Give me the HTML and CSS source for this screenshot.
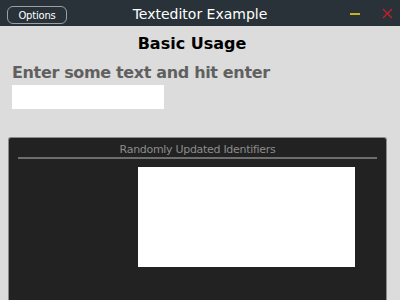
FILE: index.html
```html
<!DOCTYPE html>
<html>
<head>
<meta charset="utf-8">
<link rel="stylesheet" href="styles.css">
</head>
<body>
<div class="titlebar">
  <button class="options">Options</button>
  <div class="title">Texteditor Example</div>
  <div class="controls">
    <span class="min"></span>
    <svg class="close" width="11" height="11" viewBox="0 0 11 11"><path d="M1 1L10 10M10 1L1 10" stroke="#c8202a" stroke-width="1.3"/></svg>
  </div>
</div>
<div class="content">
  <h1 class="heading">Basic Usage</h1>
  <div class="label">Enter some text and hit enter</div>
  <div class="input"></div>
  <div class="panel">
    <div class="panel-title">Randomly Updated Identifiers</div>
    <div class="rule"></div>
    <div class="box"></div>
  </div>
</div>
</body>
</html>
```
FILE: styles.css
```css
html, body { margin: 0; padding: 0; }
body {
  width: 400px; height: 300px; overflow: hidden;
  background: #dcdcdc;
  font-family: "DejaVu Sans", Verdana, sans-serif;
}
.titlebar {
  height: 26px;
  background: #283238;
  position: relative;
  display: flex;
  align-items: center;
}
.options {
  margin-left: 7px;
  width: 60px; height: 18px;
  border: 1px solid #9aa0a4;
  border-radius: 6px;
  background: transparent;
  color: #ffffff;
  font-family: "DejaVu Sans", sans-serif;
  font-size: 10px;
  letter-spacing: -0.2px;
  padding: 0;
  margin-top: 4px;
  box-sizing: border-box;
}
.title {
  position: absolute; left: 0; right: 0; top: 5px;
  text-align: center;
  color: #ffffff;
  font-size: 14px;
  line-height: 18px;
  pointer-events: none;
}
.controls {
  margin-left: auto;
  display: flex; align-items: center;
  margin-right: 7px;
  margin-top: 1px;
}
.min {
  width: 10px; height: 2px; background: #c8b41e;
  margin-right: 22px;
}
.close { display: block; }
.content { padding: 0 12px; }
.heading {
  margin: 8px 0 0;
  padding-right: 16px;
  text-align: center;
  font-size: 16px;
  font-weight: bold;
  line-height: 20px;
  color: #000;
}
.label {
  margin-top: 9px;
  font-size: 16px; font-weight: bold;
  letter-spacing: -0.35px;
  color: #606060;
  line-height: 20px;
}
.input {
  margin-top: 2px;
  width: 152px; height: 24px;
  background: #ffffff;
}
.panel {
  margin: 28px 0 0 -4px;
  width: 379px; height: 170px;
  background: #222222;
  border: 1px solid #8a8a8a;
  border-bottom: none;
  border-radius: 3px 3px 0 0;
  box-sizing: border-box;
  padding: 0 9px;
}
.panel-title {
  text-align: center;
  color: #8c8c8c;
  font-size: 11px;
  letter-spacing: -0.3px;
  line-height: 13px;
  margin-top: 5px;
}
.rule { height: 2px; background: #6e6e6e; margin-top: 1px; }
.box {
  margin: 8px 0 0 120px;
  width: 217px; height: 100px;
  background: #ffffff;
}
```
